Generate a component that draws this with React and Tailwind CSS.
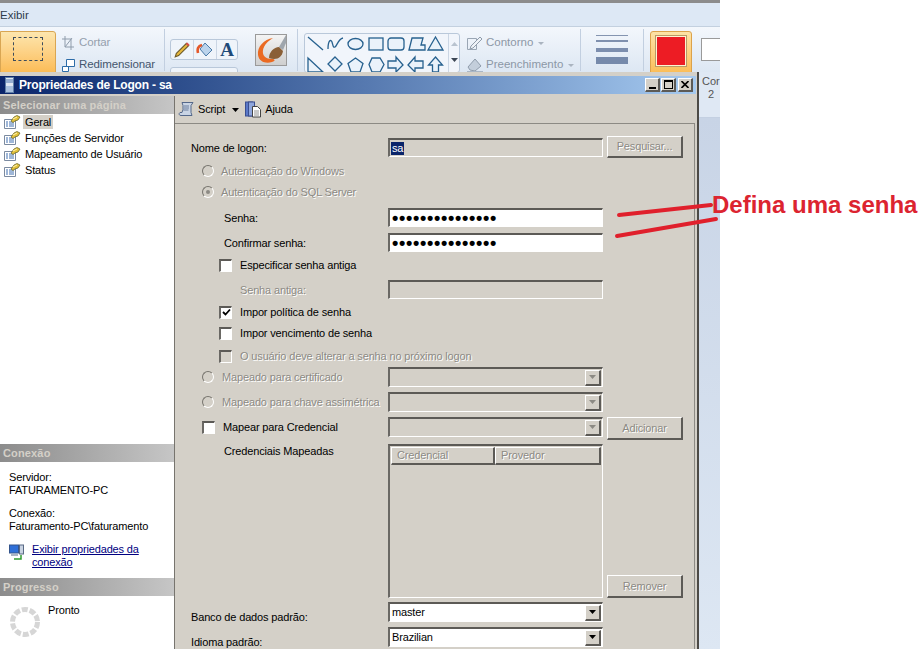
import React from 'react';

const disabled = "text-[#8c8a84] [text-shadow:1px_1px_0_#fff]";
const sunken = "border-t-2 border-l-2 border-r border-b border-t-[#5c5a56] border-l-[#6a6864] border-r-white border-b-white";
const raised = "border-t border-l border-r-2 border-b-2 border-t-white border-l-white border-r-[#5c5a56] border-b-[#5c5a56]";

function PageIcon() {
  return (
    <svg width="18" height="15" viewBox="0 0 18 15" className="shrink-0">
      <path d="M1.5 4.5h11v9h-11z" fill="#fff" stroke="#7b8aa0" />
      <path d="M3 7h2M6 7h5M3 9h2M6 9h5M3 11h2M6 11h5" stroke="#3e6fb0" />
      <path d="M8 6l3-4 3-1.5 3 1.5-2 3-3 1-2 1.5z" fill="#e3c23c" stroke="#6f6a2a" strokeWidth=".8" />
      <path d="M10 4l4-2" stroke="#fff5b0" />
    </svg>
  );
}

function Radio({ checked }) {
  return (
    <span className="w-3 h-3 rounded-full bg-[#d4d0c8] border border-t-[#77746e] border-l-[#77746e] border-r-white border-b-white flex items-center justify-center shrink-0">
      {checked && <span className="w-1 h-1 rounded-full bg-[#8c8a84]" />}
    </span>
  );
}

function Checkbox({ checked, off }) {
  return (
    <span className={`w-[13px] h-[13px] shrink-0 flex items-center justify-center ${sunken} ${off ? "bg-[#d4d0c8]" : "bg-white"}`}>
      {checked && (
        <svg width="9" height="9" viewBox="0 0 9 9">
          <path d="M1 4l2.5 2.5L8 1.5" fill="none" stroke="#000" strokeWidth="1.8" />
        </svg>
      )}
    </span>
  );
}

function Combo({ value, off }) {
  return (
    <div className={`w-[215px] h-5 flex items-center justify-between ${sunken} ${off ? "bg-[#d4d0c8]" : "bg-white"}`}>
      <span className="pl-[2px]">{value}</span>
      <span className={`w-4 h-4 bg-[#d4d0c8] flex items-center justify-center mr-px ${raised}`}>
        <svg width="7" height="4" viewBox="0 0 7 4">
          <path d="M0 0h7L3.5 4z" fill={off ? "#8c8a84" : "#000"} />
        </svg>
      </span>
    </div>
  );
}

function FormButton({ children, className }) {
  return (
    <div className={`w-[76px] flex items-center justify-center bg-[#d4d0c8] ${raised} ${disabled} ${className}`}>
      {children}
    </div>
  );
}

function Password() {
  return (
    <div className={`w-[215px] h-[19px] bg-white flex items-center pl-[2px] ${sunken}`}>
      <span className="font-bold text-[18px] leading-none tracking-[0.7px] text-black">•••••••••••••••</span>
    </div>
  );
}

function TitleButton({ children }) {
  return (
    <span className={`w-[15px] h-[14px] bg-[#d4d0c8] flex items-center justify-center ${raised}`}>{children}</span>
  );
}

function SideHeader({ children }) {
  return (
    <div className="h-[18px] shrink-0 bg-gradient-to-r from-[#8c8c8c] to-[#c6c6c6] text-[#d4d0c8] font-bold text-[11px] tracking-[0.15px] leading-[18px] pl-[3px]">
      {children}
    </div>
  );
}

function Sidebar() {
  const pages = ["Geral", "Funções de Servidor", "Mapeamento de Usuário", "Status"];
  return (
    <div className="w-[175px] shrink-0 bg-white border-r border-r-[#77746e] flex flex-col">
      <SideHeader>Selecionar uma página</SideHeader>
      <div className="flex-1 pl-[3px]">
        {pages.map((p, i) => (
          <div key={p} className="h-4 flex items-center gap-1">
            <PageIcon />
            <span className={i === 0 ? "bg-[#d4d0c8] px-[2px] -ml-[2px] leading-[14px]" : "leading-[14px]"}>{p}</span>
          </div>
        ))}
      </div>
      <SideHeader>Conexão</SideHeader>
      <div className="h-[116px] shrink-0 pl-[9px] pt-[9px] leading-[13px]">
        <div>Servidor:</div>
        <div>FATURAMENTO-PC</div>
        <div className="mt-[10px]">Conexão:</div>
        <div>Faturamento-PC\faturamento</div>
        <div className="flex mt-[10px] gap-[7px]">
          <svg width="16" height="16" viewBox="0 0 16 16" className="shrink-0 mt-px">
            <rect x="0.5" y="1" width="9" height="8" fill="#2f6fd8" stroke="#33548c" />
            <rect x="10.5" y="1" width="4" height="9" fill="#c9d3e2" stroke="#5a6a85" />
            <path d="M2 10h7v2H2z" fill="#aab4c4" />
            <path d="M5 15h7V11" fill="none" stroke="#2f9a2f" strokeWidth="1.5" />
          </svg>
          <span className="text-[#000080] underline w-[120px]">Exibir propriedades da conexão</span>
        </div>
      </div>
      <SideHeader>Progresso</SideHeader>
      <div className="h-[53px] shrink-0 flex pl-[9px] pt-2 gap-[7px]">
        <svg width="32" height="32" viewBox="0 0 32 32" className="shrink-0 mt-[2px]">
          <circle cx="16" cy="16" r="12.5" fill="none" stroke="#d6d6d6" strokeWidth="5" strokeDasharray="6 1.9" />
        </svg>
        <span className="leading-[13px]">Pronto</span>
      </div>
    </div>
  );
}

function Row({ className, label, control, button }) {
  return (
    <div className={`flex items-start ${className}`}>
      <div className="w-[197px] h-5 flex items-center shrink-0 whitespace-nowrap">{label}</div>
      {control}
      {button}
    </div>
  );
}

function FormPanel() {
  return (
    <div className="flex-1 bg-[#d4d0c8] border-t border-r border-t-[#8c8a84] border-r-[#8c8a84] pl-4 pt-[14px]">
      <Row
        className="h-[23px]"
        label="Nome de logon:"
        control={
          <div className={`w-[215px] h-[19px] flex items-center pl-px ${sunken}`}>
            <span className="bg-[#0a246a] text-white px-px leading-[13px]">sa</span>
          </div>
        }
        button={<FormButton className="ml-1 -mt-[2px] h-[22px]">Pesquisar...</FormButton>}
      />
      <Row className="h-[21px]" label={<div className={`flex items-center gap-[7px] pl-[11px] ${disabled}`}><Radio />Autenticação do Windows</div>} />
      <Row className="h-[26px]" label={<div className={`flex items-center gap-[7px] pl-[11px] ${disabled}`}><Radio checked />Autenticação do SQL Server</div>} />
      <Row className="h-[25px]" label={<span className="pl-[33px]">Senha:</span>} control={<Password />} />
      <Row className="h-[22px]" label={<span className="pl-[33px]">Confirmar senha:</span>} control={<Password />} />
      <Row className="h-[25px]" label={<div className="flex items-center gap-2 pl-7"><Checkbox />Especificar senha antiga</div>} />
      <Row
        className="h-[22px]"
        label={<span className={`pl-[49px] ${disabled}`}>Senha antiga:</span>}
        control={<div className={`w-[215px] h-[19px] ${sunken}`} />}
      />
      <Row className="h-[21px]" label={<div className="flex items-center gap-2 pl-7"><Checkbox checked />Impor política de senha</div>} />
      <Row className="h-[22px]" label={<div className="flex items-center gap-2 pl-7"><Checkbox />Impor vencimento de senha</div>} />
      <div className={`h-[22px] flex items-center gap-2 pl-7 ${disabled}`}><Checkbox off />O usuário deve alterar a senha no próximo logon</div>
      <Row className="h-[25px]" label={<div className={`flex items-center gap-2 pl-[11px] ${disabled}`}><Radio />Mapeado para certificado</div>} control={<Combo off />} />
      <Row className="h-[25px]" label={<div className={`flex items-center gap-2 pl-[11px] ${disabled}`}><Radio />Mapeado para chave assimétrica</div>} control={<Combo off />} />
      <Row
        className="h-[27px]"
        label={<div className="flex items-center gap-2 pl-[11px]"><Checkbox />Mapear para Credencial</div>}
        control={<Combo off />}
        button={<FormButton className="ml-1 h-[23px]">Adicionar</FormButton>}
      />
      <div className="h-[158px] flex items-start">
        <div className="w-[197px] pl-[33px] shrink-0 leading-[14px]">Credenciais Mapeadas</div>
        <div className={`w-[215px] h-[154px] p-px ${sunken}`}>
          <div className={`flex h-[18px] ${disabled}`}>
            <div className={`w-[104px] pl-[5px] leading-[15px] ${raised}`}>Credencial</div>
            <div className={`flex-1 pl-[5px] leading-[15px] ${raised}`}>Provedor</div>
          </div>
        </div>
        <FormButton className="ml-1 h-[23px] mt-[131px]">Remover</FormButton>
      </div>
      <Row className="h-[25px]" label={<span className="mt-[11px]">Banco de dados padrão:</span>} control={<Combo value="master" />} />
      <Row className="h-[22px]" label={<span className="mt-[11px]">Idioma padrão:</span>} control={<Combo value="Brazilian" />} />
    </div>
  );
}

function Dialog() {
  return (
    <div className="w-[699px] shrink-0 h-full bg-[#d4d0c8] border-r-2 border-r-[#4c4a46] flex flex-col overflow-hidden pt-1 text-[11px] tracking-[-0.15px]">
      <div className="h-[18px] shrink-0 mr-[1px] flex items-center bg-gradient-to-r from-[#0a246a] to-[#a6caf0] pl-[5px] pr-[3px]">
        <svg width="9" height="16" viewBox="0 0 9 16" className="shrink-0">
          <rect x="0.5" y="0.5" width="8" height="15" fill="#dfe7f2" stroke="#5f7fa8" />
          <path d="M1 3h7M1 5h7" stroke="#4a74b0" />
          <path d="M1 9h7v6H1z" fill="#a9c0de" />
        </svg>
        <span className="ml-[5px] text-white font-bold text-[12px] tracking-[-0.2px] flex-1">Propriedades de Logon - sa</span>
        <div className="flex">
          <TitleButton><span className="w-[7px] h-[2px] bg-black mt-[6px]" /></TitleButton>
          <span className="w-px" />
          <TitleButton><span className="w-[9px] h-[9px] border border-t-2 border-black" /></TitleButton>
          <span className="w-[2px]" />
          <TitleButton>
            <svg width="8" height="7" viewBox="0 0 8 7"><path d="M.5 0l7 7M7.5 0l-7 7" stroke="#000" strokeWidth="1.6" /></svg>
          </TitleButton>
        </div>
      </div>
      <div className="h-[2px] shrink-0" />
      <div className="flex-1 flex min-h-0">
        <Sidebar />
        <div className="flex-1 flex flex-col pr-[2px] min-w-0">
          <div className="h-[27px] shrink-0 flex items-center pl-[3px]">
            <svg width="17" height="17" viewBox="0 0 17 17" className="shrink-0">
              <path d="M4 1.5h11l-2 3v7l1 3H3c-2 0-2.5-2-1-3h2l1-3V4.5z" fill="#c9d4e4" stroke="#54688a" />
              <path d="M6 5h5M6 7h5M5.5 9h5" stroke="#54688a" strokeWidth=".8" />
            </svg>
            <span className="ml-[3px]">Script</span>
            <svg width="7" height="4" viewBox="0 0 7 4" className="ml-[7px]"><path d="M0 0h7L3.5 4z" fill="#000" /></svg>
            <svg width="17" height="17" viewBox="0 0 17 17" className="ml-[6px] shrink-0">
              <rect x="0.5" y="1" width="7" height="14" fill="#5a78c8" stroke="#3a4f90" />
              <rect x="3.5" y="1" width="6" height="14" fill="#8fa6dc" stroke="#3a4f90" />
              <path d="M7.5 5.5h5l3 3v7.5h-8z" fill="#fff" stroke="#444" />
              <path d="M9 10h5M9 12h5M9 14h5" stroke="#777" strokeWidth=".8" />
            </svg>
            <span className="ml-[3px]">Ajuda</span>
          </div>
          <FormPanel />
        </div>
      </div>
    </div>
  );
}

function Shapes() {
  const s = { fill: "#eaf2fa", stroke: "#27618f", strokeWidth: 1.3 };
  return (
    <svg width="143" height="40" viewBox="0 0 143 40" className="shrink-0">
      <path d="M3 3l15 13" fill="none" stroke={s.stroke} strokeWidth="1.3" />
      <path d="M23 15c0-9 3-10 4-7s1 6 3 5 3-8 8-9" fill="none" stroke={s.stroke} strokeWidth="1.3" />
      <ellipse cx="50.5" cy="10" rx="7.5" ry="5.5" {...s} />
      <rect x="64" y="4" width="14" height="12" {...s} />
      <rect x="83" y="4" width="16" height="12" rx="3" {...s} />
      <path d="M104 16l3-12h11l-2 7h4v5z" {...s} />
      <path d="M123 16l7.5-13 7.5 13z" {...s} />
      <path d="M3 24v14h15z" {...s} />
      <path d="M30 24l7 7-7 7-7-7z" transform="translate(0 -1)" {...s} />
      <path d="M50.5 24l7.5 5.5-3 8.5h-9l-3-8.5z" {...s} />
      <path d="M67 24h8l4 6.5-4 7.5h-8l-3-7.5z" {...s} />
      <path d="M83 27h8v-4l7 8-7 7v-4h-8z" {...s} />
      <path d="M118 27h-8v-4l-7 8 7 7v-4h8z" {...s} />
      <path d="M130.5 23l7 8h-4v7h-6v-7h-4z" {...s} />
    </svg>
  );
}

function Ribbon() {
  const divider = "w-px h-[42px] bg-[#c2cfe0] mt-[2px] shrink-0";
  return (
    <div className="h-[45px] overflow-hidden flex items-start bg-gradient-to-b from-[#f3f7fc] to-[#dde7f3] text-[11.5px]">
      <div className="w-[56px] h-[45px] mt-[4px] shrink-0 rounded-tr-[3px] border border-[#d9a653] bg-gradient-to-b from-[#fde6ae] to-[#fbb94e] pt-[5px] pl-3">
        <div className="w-[30px] h-6 border border-dashed border-[#3c4c5c]" />
      </div>
      <div className="w-[108px] shrink-0 pl-[6px] pt-[6px] tracking-[-0.1px]">
        <div className="flex items-center gap-[5px] h-5 text-[#94a0ad]">
          <svg width="12" height="14" viewBox="0 0 12 14"><path d="M3 0v11h9M0 3h9v11M3 11l7-9" fill="none" stroke="#8f9cab" /></svg>
          <span>Cortar</span>
        </div>
        <div className="flex items-center gap-[4px] h-5 mt-[2px] text-[#44566e]">
          <svg width="13" height="13" viewBox="0 0 13 13"><path d="M4.5 .5h8v7h-8zM.5 7.5h6v5h-6z" fill="#fff" stroke="#2d6ca8" /></svg>
          <span>Redimensionar</span>
        </div>
      </div>
      <div className={divider} />
      <div className="w-[68px] ml-[5px] shrink-0 pt-3">
        <div className="h-[21px] border border-[#b9c8da] rounded-[3px] flex items-center bg-[#eff4fa]">
          <div className="w-[23px] h-full flex items-center justify-center border-r border-[#cbd6e4]">
            <svg width="18" height="18" viewBox="0 0 16 16">
              <path d="M3 11l9-9 2 2-9 9-3 1z" fill="#e8b93c" stroke="#6c5a2a" />
              <path d="M12 2l2 2" stroke="#d8504a" strokeWidth="2" />
            </svg>
          </div>
          <div className="w-[23px] h-full flex items-center justify-center border-r border-[#cbd6e4]">
            <svg width="18" height="17" viewBox="0 0 18 17">
              <path d="M9 2l7 7-6 6-6-7z" fill="#bcd4ec" stroke="#4a7ba8" />
              <path d="M6 4c-4 1-5 4-4 8" fill="none" stroke="#e4582a" strokeWidth="2.6" />
            </svg>
          </div>
          <span className="flex-1 text-center font-['Liberation_Serif',serif] font-bold text-[19px] leading-none text-[#1e4a78]">A</span>
        </div>
        <div className="h-4 mt-[7px] border border-[#b9c8da] rounded-[3px] bg-[#eff4fa]" />
      </div>
      <div className="ml-[17px] mt-[7px] w-[32px] h-[32px] shrink-0 bg-gradient-to-b from-[#f4f4f4] to-[#cfcfcf] border border-[#9a9a9a]">
        <svg width="30" height="30" viewBox="0 0 30 30">
          <path d="M23 12L30 0v8l-3 7z" fill="#9fa6ad" />
          <path d="M17 3C8 4 1 12 2 20c1 7 8 9 14 7 4-1 3-3 0-3-6 0-10-3-9-9 1-5 5-9 10-12z" fill="#ea6a22" />
          <path d="M13 23c0-6 5-11 10-11l4 4c-1 6-6 10-14 7z" fill="#8a5f36" />
        </svg>
      </div>
      <div className={`${divider} ml-[10px]`} />
      <div className="ml-[6px] mt-[6px] w-[156px] h-[40px] shrink-0 flex border border-[#b9c8da] rounded-[3px] bg-[#f1f5fb]">
        <Shapes />
        <div className="flex-1 border-l border-[#cbd6e4] flex flex-col items-center pt-[8px] gap-[12px]">
          <svg width="7" height="4" viewBox="0 0 7 4"><path d="M0 4h7L3.5 0z" fill="#b9c3cf" /></svg>
          <svg width="7" height="4" viewBox="0 0 7 4"><path d="M0 0h7L3.5 4z" fill="#3c4654" /></svg>
        </div>
      </div>
      <div className="w-[114px] ml-[6px] shrink-0 pt-[6px] text-[#8c98a6]">
        <div className="flex items-center gap-[2px] h-5">
          <svg width="18" height="16" viewBox="0 0 18 16" className="shrink-0"><path d="M1.5 3.5h9v11h-9z" fill="none" stroke="#9aa6b4" /><path d="M5 11L14 2l2 2-9 9-3 1z" fill="#eef2f7" stroke="#8f9cab" /></svg>
          <span>Contorno</span>
          <svg width="6" height="3" viewBox="0 0 6 3" className="ml-[3px]"><path d="M0 0h6L3 3z" fill="#aab4c0" /></svg>
        </div>
        <div className="flex items-center gap-[2px] h-5 mt-[2px]">
          <svg width="18" height="16" viewBox="0 0 18 16" className="shrink-0"><path d="M2 10l7-8 6 7-6 5-5-1z" fill="#c3cedb" stroke="#8f9cab" /><path d="M1 14h16v2H1z" fill="#aab7c6" /></svg>
          <span>Preenchimento</span>
          <svg width="6" height="3" viewBox="0 0 6 3" className="ml-[3px]"><path d="M0 0h6L3 3z" fill="#aab4c0" /></svg>
        </div>
      </div>
      <div className={divider} />
      <svg width="32" height="32" viewBox="0 0 32 32" className="ml-[15px] mt-[8px] shrink-0">
        <rect y="0" width="32" height="1" fill="#8494b0" />
        <rect y="5" width="32" height="2" fill="#7f90ae" />
        <rect y="13" width="32" height="4" fill="#7c8eae" />
        <rect y="22" width="32" height="7" fill="#768aab" />
      </svg>
      <div className={`${divider} ml-[15px]`} />
      <div className="ml-[6px] mt-[4px] w-[42px] h-[45px] shrink-0 rounded-t-[3px] border border-[#dca24a] bg-gradient-to-b from-[#fde3a6] to-[#fbbb52] pt-[3px] px-[4px]">
        <div className="h-[32px] border border-[#b89a66] bg-[#fff3d0] p-[1px]">
          <div className="h-full bg-[#ed1c24]" />
        </div>
      </div>
      <div className="ml-[9px] mt-[11px] w-[23px] h-[23px] shrink-0 bg-white border border-[#9a9a9a]" />
    </div>
  );
}

export default function App() {
  return (
    <div className="relative w-[924px] h-[649px] overflow-hidden bg-white text-black font-['Liberation_Sans',Arial,sans-serif]">
      <div className="w-[720px] h-full flex flex-col overflow-hidden">
        <div className="h-[3px] shrink-0 bg-[#8c8c8c]" />
        <div className="h-6 shrink-0 bg-[#dde8f5] border-b border-b-[#c3d0df] text-[11.5px] leading-[24px] text-[#2f3b4b]">Exibir</div>
        <Ribbon />
        <div className="flex-1 flex min-h-0">
          <Dialog />
          <div className="flex-1 min-w-0 flex flex-col bg-[#dfe8f4] overflow-hidden">
            <div className="h-[46px] shrink-0 text-[11px] leading-[13px] text-[#555] pl-[3px] pt-[3px] border-b border-b-[#c4d0e2] whitespace-nowrap">
              <div>Cor</div>
              <div className="pl-[6px]">2</div>
            </div>
            <div className="flex-1 bg-gradient-to-b from-[#c8d4e6] to-[#dde7f3]" />
          </div>
        </div>
      </div>
      {/* red note drawn over the screenshot */}
      <svg width="924" height="649" className="absolute inset-0 pointer-events-none">
        <path d="M619 215L711 205M617 236L716 219" stroke="#e0202c" strokeWidth="4" strokeLinecap="round" />
      </svg>
      <div className="absolute left-[712px] top-[191px] font-bold text-[24px] leading-[28px] text-[#dc2430] whitespace-nowrap">Defina uma senha</div>
    </div>
  );
}
